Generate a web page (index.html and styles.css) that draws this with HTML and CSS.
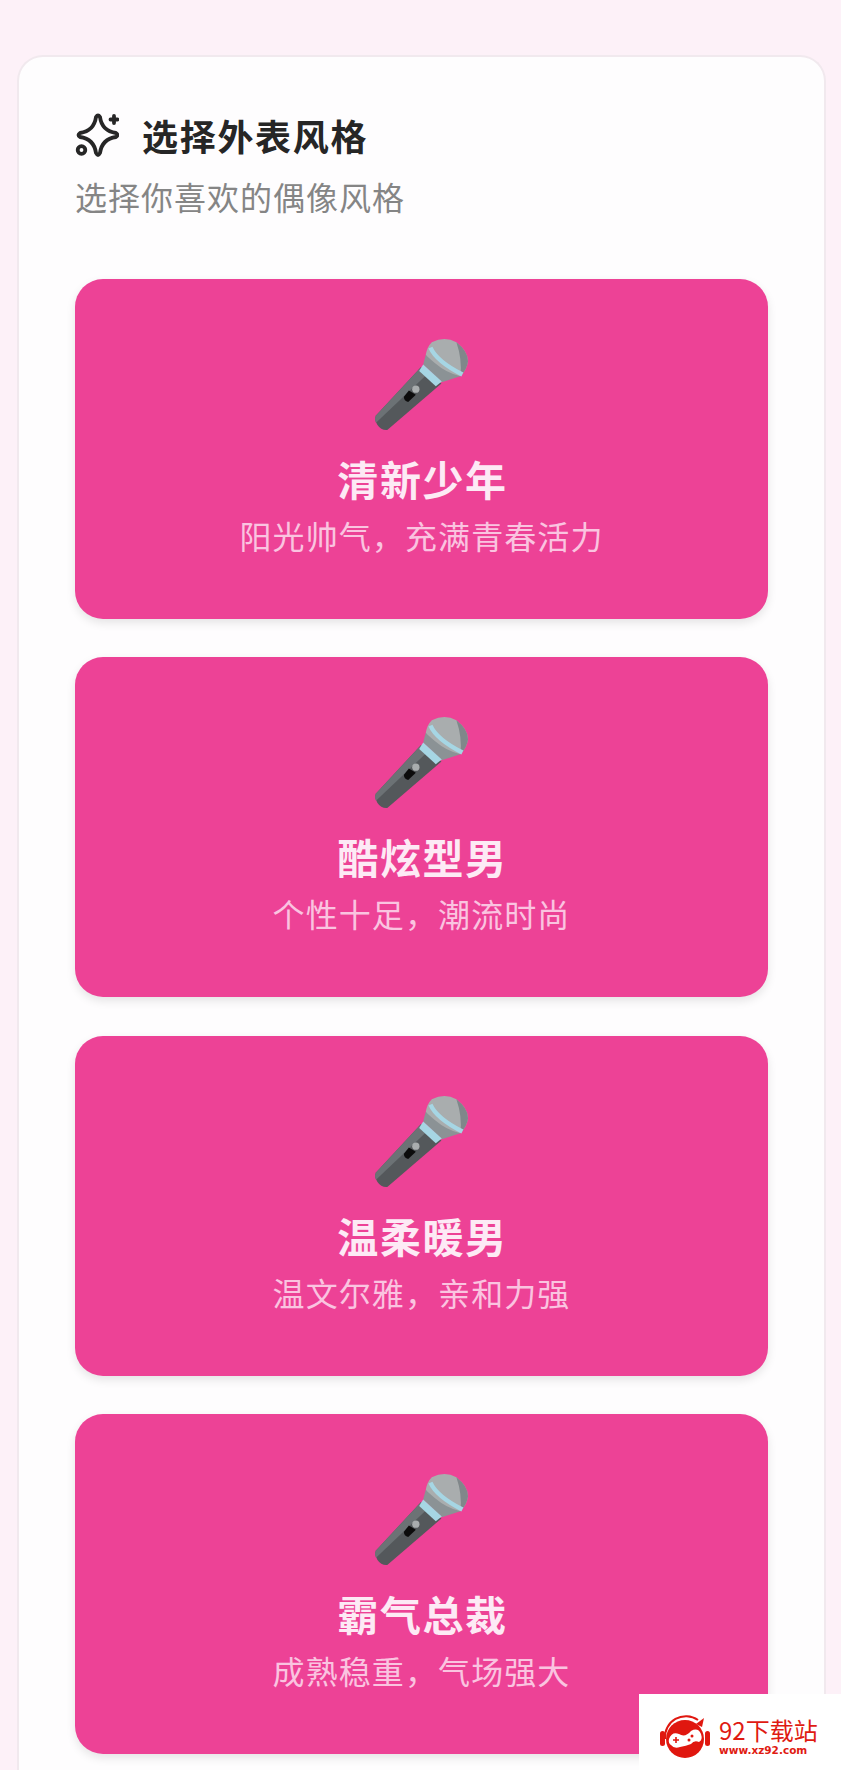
FILE: index.html
```html
<!DOCTYPE html>
<html lang="zh-CN">
<head>
  <meta charset="UTF-8" />
  <meta name="viewport" content="width=device-width, initial-scale=1" />
  <title>选择外表风格</title>
  <link rel="stylesheet" href="styles.css">
</head>
<body>
  <svg class="defs" width="0" height="0" aria-hidden="true">
    <symbol id="mic" viewBox="90 40 310 310">
      <path d="M243 143 L108 288 Q102 300 112 316 Q124 334 142 332 L305 192 Z" fill="#54585b"/>
      <path d="M243 143 L108 288 Q102 298 108 310 L262 164 Z" fill="#6c7275"/>
      <path d="M258 105 L250 135 L306 188 L362 170 Z" fill="#8b9295"/>
      <path d="M250 135 L238 154 L288 200 L306 186 Z" fill="#a6d6e4"/>
      <path d="M276 68 Q315 48 350 68 Q385 95 385 125 Q382 150 362 170 Q320 160 285 130 Q262 112 258 105 Q262 82 276 68 Z" fill="#a9adae"/>
      <path d="M350 68 Q385 95 385 125 Q382 150 362 170 Q368 120 350 68 Z" fill="#80878a"/>
      <path d="M272 84 Q290 125 368 165" fill="none" stroke="#a6d6e4" stroke-width="13"/>
      <path d="M207 213 L192 232 Q192 245 205 248 L228 226 Z" fill="#0c0c0c"/>
      <circle cx="228" cy="209" r="11" fill="#a9adae"/>
    </symbol>
  </svg>

  <div class="panel">
    <div class="panel-head">
      <svg class="sparkle" viewBox="0 0 44 44" fill="none" stroke="#262626" stroke-width="3.8" stroke-linejoin="round" stroke-linecap="round">
        <path d="M21 4 Q23 1 25 4 Q27 18 41 20 Q44 22 41 24 Q27 26 25 40 Q23 44 21 40 Q19 26 5 24 Q2 22 5 20 Q19 18 21 4 Z"/>
        <path d="M39 3 V10 M35.5 6.5 H42.5"/>
        <circle cx="6.5" cy="37" r="3.8"/>
      </svg>
      <h1>选择外表风格</h1>
    </div>
    <p class="panel-sub">选择你喜欢的偶像风格</p>

    <div class="style-list">
      <div class="style-item">
        <svg class="mic"><use href="#mic"/></svg>
        <div class="style-name">清新少年</div>
        <div class="style-desc">阳光帅气，充满青春活力</div>
      </div>
      <div class="style-item">
        <svg class="mic"><use href="#mic"/></svg>
        <div class="style-name">酷炫型男</div>
        <div class="style-desc">个性十足，潮流时尚</div>
      </div>
      <div class="style-item">
        <svg class="mic"><use href="#mic"/></svg>
        <div class="style-name">温柔暖男</div>
        <div class="style-desc">温文尔雅，亲和力强</div>
      </div>
      <div class="style-item">
        <svg class="mic"><use href="#mic"/></svg>
        <div class="style-name">霸气总裁</div>
        <div class="style-desc">成熟稳重，气场强大</div>
      </div>
    </div>
  </div>

  <!-- 水印 -->
  <div class="watermark">
    <svg class="wm-logo" viewBox="0 0 50 44">
      <path d="M5 25 A21 21 0 0 1 38 6" fill="none" stroke="#e0170f" stroke-width="2"/>
      <path d="M36 10 L44 4 L42 13 Z" fill="#e0170f"/>
      <rect x="0" y="17" width="5" height="15" rx="2.5" fill="#e0170f"/>
      <rect x="45" y="17" width="5" height="15" rx="2.5" fill="#e0170f"/>
      <circle cx="25" cy="25" r="19" fill="#e0170f"/>
      <path d="M9 25 Q12 17 19 20 Q25 24 31 17 Q38 13 41 20 Q43 26 39 28 Q34 26 31 30 Q26 32 20 33 Q14 35 11 31 Q8 29 9 25 Z" fill="#fff"/>
      <path d="M13 26 H19 M16 23 V29" stroke="#e0170f" stroke-width="1.6"/>
      <circle cx="32" cy="22" r="1.5" fill="#e0170f"/>
      <circle cx="29" cy="26" r="1.5" fill="#e0170f"/>
    </svg>
    <div class="wm-text">
      <div class="wm-name">92下载站</div>
      <div class="wm-url">www.xz92.com</div>
    </div>
  </div>
</body>
</html>
```

FILE: styles.css
```css
html, body {
  height: 1770px;
  overflow: hidden;
}

body {
  position: relative;
  margin: 0;
  padding: 55px 15px 0 17px;
  box-sizing: border-box;
  background-color: #fdf1f8;
  font-family: "Noto Sans CJK SC", "Noto Sans", sans-serif;
}

.defs {
  position: absolute;
}

.panel {
  background-color: #fefdfe;
  border: 2px solid #f1e9ee;
  border-bottom: none;
  border-radius: 26px 26px 0 0;
  padding: 54px 56px 0 56px;
  height: 1800px;
  box-sizing: border-box;
}

.panel-head {
  display: flex;
  align-items: center;
  gap: 23px;
  height: 48px;
}

.sparkle {
  width: 44px;
  height: 44px;
  flex: none;
}

.panel-head h1 {
  margin: 0;
  font-size: 36px;
  font-weight: 700;
  letter-spacing: 1.7px;
  color: #262626;
  line-height: 48px;
}

.panel-sub {
  margin: 14px 0 0;
  font-size: 32px;
  letter-spacing: 1px;
  line-height: 46px;
  color: #858585;
}

.style-list {
  margin-top: 60px;
  display: flex;
  flex-direction: column;
  gap: 38.4px;
}

.style-item {
  height: 340px;
  box-sizing: border-box;
  padding-top: 54px;
  border-radius: 28px;
  background-color: #ed4296;
  box-shadow: 0 4px 10px rgba(0, 0, 0, 0.1);
  display: flex;
  flex-direction: column;
  align-items: center;
  text-align: center;
}

.mic {
  width: 103px;
  height: 103px;
}

.style-name {
  margin-top: 14px;
  padding-left: 2px;
  font-size: 41px;
  font-weight: 700;
  letter-spacing: 1.6px;
  line-height: 56px;
  color: #fdeaf5;
}

.style-desc {
  margin-top: 6px;
  font-size: 32px;
  letter-spacing: 1.1px;
  line-height: 46px;
  color: #fac4e0;
}

.watermark {
  position: absolute;
  left: 639px;
  top: 1694px;
  width: 202px;
  height: 76px;
  background-color: #fff;
  display: flex;
  align-items: center;
  gap: 9px;
  padding: 7px 0 0 21px;
  box-sizing: border-box;
}

.wm-logo {
  width: 50px;
  height: 44px;
  flex: none;
}

.wm-name {
  font-size: 24px;
  line-height: 28px;
  color: #df1b12;
}

.wm-url {
  font-family: "DejaVu Sans", sans-serif;
  font-size: 10.5px;
  font-weight: 700;
  line-height: 12px;
  color: #df1b12;
}
```
